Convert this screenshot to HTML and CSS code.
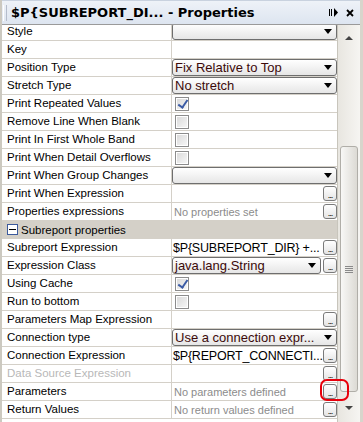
FILE: index.html
```html
<!DOCTYPE html>
<html lang="en">
<head>
  <meta charset="UTF-8">
  <title>Properties</title>
  <link rel="stylesheet" href="styles.css">
</head>
<body>
  <div class="panel">
    <div class="titlebar">
      <span class="grip"></span>
      <span class="title">$P{SUBREPORT_DI... - Properties</span>
      <span class="title-icons">
        <svg width="10" height="9" viewBox="0 0 10 9"><rect x="0" y="1" width="1" height="7" fill="#000"/><rect x="2" y="1" width="1" height="7" fill="#000"/><path d="M5 0 L9 4.5 L5 9 Z" fill="#000"/></svg>
        <svg width="8" height="8" viewBox="0 0 8 8"><path d="M1 1 L7 7 M7 1 L1 7" stroke="#000" stroke-width="1.8"/></svg>
      </span>
    </div>

    <div class="body">
      <div class="sheet">
        <div class="rows">
          <div class="row"><div class="label">Style</div><div class="value"><div class="combo"><span></span><i class="arrow"></i></div></div></div>
          <div class="row"><div class="label">Key</div><div class="value"></div></div>
          <div class="row"><div class="label">Position Type</div><div class="value"><div class="combo"><span>Fix Relative to Top</span><i class="arrow"></i></div></div></div>
          <div class="row"><div class="label">Stretch Type</div><div class="value"><div class="combo"><span>No stretch</span><i class="arrow"></i></div></div></div>
          <div class="row"><div class="label">Print Repeated Values</div><div class="value"><span class="check on"></span></div></div>
          <div class="row"><div class="label">Remove Line When Blank</div><div class="value"><span class="check"></span></div></div>
          <div class="row"><div class="label">Print In First Whole Band</div><div class="value"><span class="check"></span></div></div>
          <div class="row"><div class="label">Print When Detail Overflows</div><div class="value"><span class="check"></span></div></div>
          <div class="row"><div class="label">Print When Group Changes</div><div class="value"><div class="combo"><span></span><i class="arrow"></i></div></div></div>
          <div class="row"><div class="label">Print When Expression</div><div class="value"><span class="fill"></span><span class="dots">...</span></div></div>
          <div class="row"><div class="label">Properties expressions</div><div class="value"><span class="fill muted">No properties set</span><span class="dots">...</span></div></div>
          <div class="row section"><span class="minus"></span>Subreport properties</div>
          <div class="row"><div class="label">Subreport Expression</div><div class="value"><span class="fill expr">$P{SUBREPORT_DIR} +...</span><span class="dots">...</span></div></div>
          <div class="row"><div class="label">Expression Class</div><div class="value"><div class="combo short"><span>java.lang.String</span><i class="arrow"></i></div><span class="dots">...</span></div></div>
          <div class="row"><div class="label">Using Cache</div><div class="value"><span class="check on"></span></div></div>
          <div class="row"><div class="label">Run to bottom</div><div class="value"><span class="check"></span></div></div>
          <div class="row"><div class="label">Parameters Map Expression</div><div class="value"><span class="fill"></span><span class="dots">...</span></div></div>
          <div class="row"><div class="label">Connection type</div><div class="value"><div class="combo"><span>Use a connection expr...</span><i class="arrow"></i></div></div></div>
          <div class="row"><div class="label">Connection Expression</div><div class="value"><span class="fill expr">$P{REPORT_CONNECTI...</span><span class="dots">...</span></div></div>
          <div class="row"><div class="label disabled">Data Source Expression</div><div class="value"><span class="fill"></span><span class="dots">...</span></div></div>
          <div class="row"><div class="label">Parameters</div><div class="value"><span class="fill muted">No parameters defined</span><span class="dots">...</span></div></div>
          <div class="row"><div class="label">Return Values</div><div class="value"><span class="fill muted">No return values defined</span><span class="dots">...</span></div></div>
        </div>
      </div>
      <div class="scrollbar">
        <i class="up"></i>
        <div class="track"><div class="thumb"><span class="grips"></span></div></div>
        <i class="down"></i>
      </div>
    </div>

    <!-- red annotation drawn over the Parameters button -->
    <div class="mark"></div>
  </div>
</body>
</html>
```

FILE: styles.css
```css
body {
  margin: 0;
  background: #ece9d8;
  font-family: "Liberation Sans", Arial, sans-serif;
}

.panel {
  position: relative;
  width: 363px;
  height: 422px;
  box-sizing: border-box;
  border-left: 2px solid #ccc9c0;
  border-right: 3px solid #d8d5cc;
  background: #ece9e4;
  display: flex;
  flex-direction: column;
  overflow: hidden;
}

.titlebar {
  height: 25px;
  flex: none;
  display: flex;
  align-items: center;
  box-sizing: border-box;
  border-top: 1px solid #c9d2df;
  border-bottom: 1px solid #9a9a9a;
  background: linear-gradient(#eef2f8, #dde5f0);
}

.grip {
  width: 2px;
  height: 16px;
  margin: 0 4px 0 1px;
  border-left: 1px solid #fff;
  border-right: 1px solid #b4bccb;
}

.title {
  flex: 1;
  font-family: "DejaVu Sans", Verdana, sans-serif;
  font-weight: bold;
  font-size: 13px;
  color: #000;
}

.title-icons {
  display: flex;
  align-items: center;
  gap: 7px;
  margin-right: 6px;
}

.body {
  flex: 1;
  display: flex;
  min-height: 0;
}

.sheet {
  flex: 1;
  overflow: hidden;
  background: #fff;
}

.rows {
  margin-top: -2px;
}

.row {
  height: 18px;
  display: flex;
  box-sizing: border-box;
  border-bottom: 1px solid #d4d0c8;
  font-size: 11.5px;
}

.label {
  width: 170px;
  flex: none;
  box-sizing: border-box;
  padding-left: 5px;
  line-height: 17px;
  border-right: 1px solid #d4d0c8;
  white-space: nowrap;
  overflow: hidden;
}

.label.disabled {
  color: #b8b8b8;
}

.value {
  flex: 1;
  display: flex;
  align-items: center;
  min-width: 0;
}

.fill {
  flex: 1;
  padding-left: 2px;
  white-space: nowrap;
  overflow: hidden;
}

.muted {
  font-size: 11px;
  color: #8c8c8c;
}

.expr {
  padding-left: 1px;
  font-size: 12.5px;
  letter-spacing: -0.2px;
  color: #000;
}

.combo {
  flex: 1;
  height: 17px;
  box-sizing: border-box;
  border: 1px solid #6e6e6e;
  border-radius: 3px;
  background: linear-gradient(#ffffff, #e6e6e6);
  display: flex;
  align-items: center;
  padding-left: 2px;
  font-size: 13px;
  color: #3c0a0a;
  white-space: nowrap;
  overflow: hidden;
}

.combo span {
  flex: 1;
}

.combo.short {
  margin-right: 2px;
}

.arrow {
  width: 0;
  height: 0;
  margin-right: 4px;
  border-left: 4px solid transparent;
  border-right: 4px solid transparent;
  border-top: 5px solid #000;
}

.check {
  width: 14px;
  height: 14px;
  margin-left: 3px;
  box-sizing: border-box;
  border: 1px solid #8c8c8c;
  box-shadow: inset 0 0 0 1px #fff;
  background: linear-gradient(135deg, #d8d8d8, #f8f8f8);
  position: relative;
}

.check.on::after {
  content: "";
  position: absolute;
  left: 4px;
  top: 0;
  width: 4px;
  height: 8px;
  border-right: 2px solid #3b5ba5;
  border-bottom: 2px solid #3b5ba5;
  transform: rotate(35deg);
}

.dots {
  width: 14px;
  height: 15px;
  flex: none;
  box-sizing: border-box;
  border: 1px solid #7a7a7a;
  border-radius: 3px;
  background: linear-gradient(#ffffff, #e4e4e4);
  font-size: 9px;
  line-height: 16px;
  text-align: center;
  letter-spacing: -1px;
}

.section {
  background: #d4d0c8;
  align-items: center;
  padding-left: 5px;
}

.minus {
  width: 9px;
  height: 9px;
  margin-right: 3px;
  border: 1px solid #3c5a9c;
  background: #fff;
  position: relative;
}

.minus::after {
  content: "";
  position: absolute;
  left: 1px;
  top: 4px;
  width: 7px;
  height: 1px;
  background: #000;
}

.scrollbar {
  width: 22px;
  flex: none;
  display: flex;
  flex-direction: column;
  align-items: center;
  border-left: 1px solid #c8c5bc;
  background: linear-gradient(90deg, #e8e6e0, #f6f5f2);
}

.up, .down {
  width: 0;
  height: 0;
  border-left: 4px solid transparent;
  border-right: 4px solid transparent;
}

.up {
  margin: 11px 0 0;
  border-bottom: 4px solid #444;
}

.down {
  margin: 6px 0 12px;
  border-top: 4px solid #444;
}

.track {
  flex: 1;
  width: 100%;
  display: flex;
  flex-direction: column;
  justify-content: flex-end;
  padding: 0 2px 8px;
  box-sizing: border-box;
}

.thumb {
  height: 246px;
  box-sizing: border-box;
  border: 1px solid #b0aea8;
  border-radius: 3px;
  background: linear-gradient(90deg, #f8f8f6, #dcdad4);
  display: flex;
  align-items: center;
  justify-content: center;
}

.grips {
  width: 8px;
  height: 7px;
  background: linear-gradient(#8a8a8a 1px, transparent 1px) 0 0 / 8px 2px;
}

.mark {
  position: absolute;
  left: 318px;
  top: 379px;
  width: 25px;
  height: 18px;
  border: 2px solid #e8000b;
  border-radius: 7px;
}
```
